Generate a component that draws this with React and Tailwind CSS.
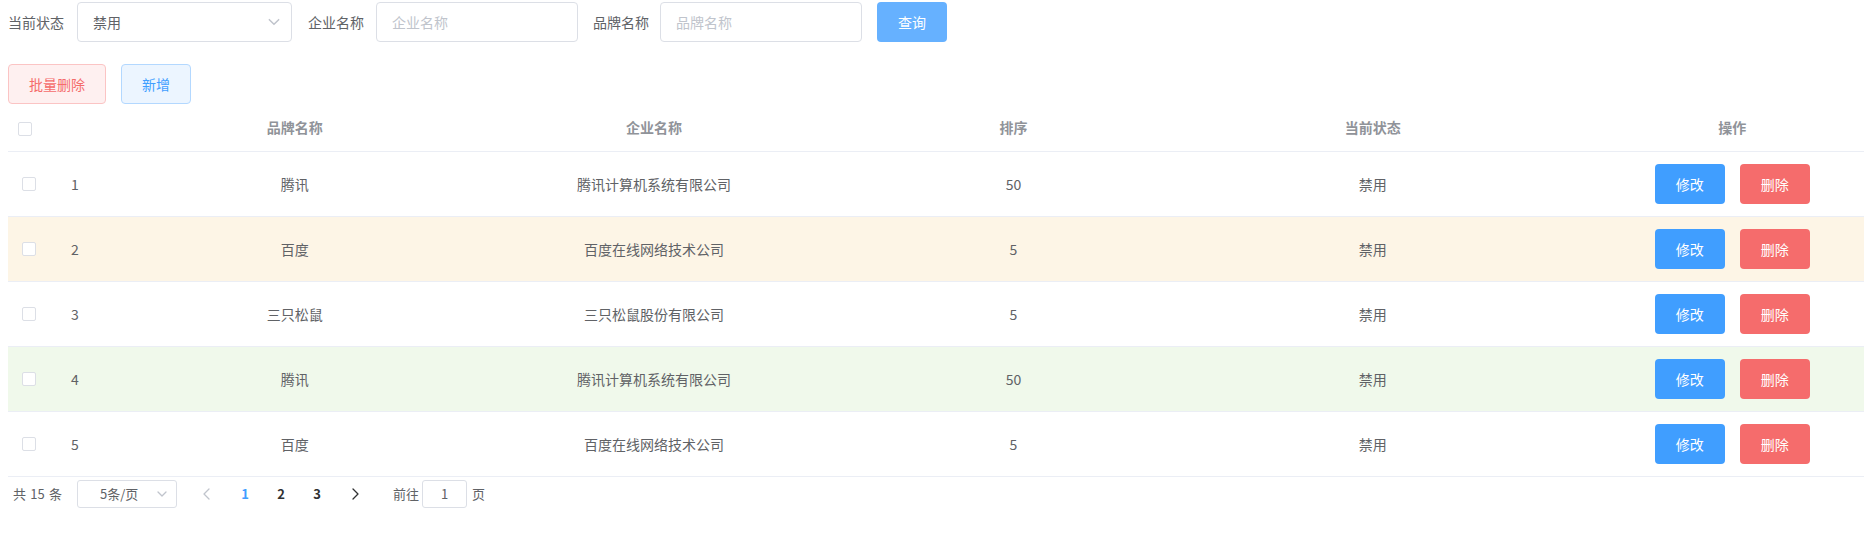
import React from "react";

const rows = [
    { id: 1, brand: "腾讯", company: "腾讯计算机系统有限公司", sort: 50, status: "禁用", bg: "bg-white" },
    { id: 2, brand: "百度", company: "百度在线网络技术公司", sort: 5, status: "禁用", bg: "bg-[#fdf5e6]" },
    { id: 3, brand: "三只松鼠", company: "三只松鼠股份有限公司", sort: 5, status: "禁用", bg: "bg-white" },
    { id: 4, brand: "腾讯", company: "腾讯计算机系统有限公司", sort: 50, status: "禁用", bg: "bg-[#f0f9eb]" },
    { id: 5, brand: "百度", company: "百度在线网络技术公司", sort: 5, status: "禁用", bg: "bg-white" },
];

function Chevron({ dir = "down", color = "#c0c4cc", size = 12 }) {
    const pts = {
        down: "2,4 6,8 10,4",
        left: "8,1 3,6 8,11",
        right: "4,1 9,6 4,11",
    };
    return (
        <svg width={size} height={size} viewBox="0 0 12 12" fill="none">
            <polyline points={pts[dir]} stroke={color} strokeWidth="1.3" strokeLinecap="round" strokeLinejoin="round" />
        </svg>
    );
}

function Checkbox() {
    return <span className="block h-[14px] w-[14px] rounded-[2px] border border-[#dcdfe6] bg-white" />;
}

const cols = "grid grid-cols-[55px_52px_repeat(5,359.4px)]";

function App() {
    return (
        <div className="w-full min-h-screen overflow-hidden bg-white font-['Noto_Sans_CJK_SC',sans-serif] text-[14px] text-[#606266]">

            {/* search form */}
            <div className="mt-[2px] flex h-10 items-center pl-2">
                <span className="leading-none">当前状态</span>
                <div className="ml-[13px] flex h-10 w-[215px] items-center justify-between rounded-[4px] border border-[#dcdfe6] pl-[15px] pr-[10px]">
                    <span className="leading-none">禁用</span>
                    <Chevron dir="down" size={14} />
                </div>
                <span className="ml-4 leading-none">企业名称</span>
                <div className="ml-3 flex h-10 w-[202px] items-center rounded-[4px] border border-[#dcdfe6] px-[15px] text-[#c0c4cc]">
                    <span className="leading-none">企业名称</span>
                </div>
                <span className="ml-[15px] leading-none">品牌名称</span>
                <div className="ml-[11px] flex h-10 w-[202px] items-center rounded-[4px] border border-[#dcdfe6] px-[15px] text-[#c0c4cc]">
                    <span className="leading-none">品牌名称</span>
                </div>
                <button className="ml-[15px] flex h-10 w-[70px] items-center justify-center rounded-[4px] bg-[#66b1ff] text-white">
                    查询
                </button>
            </div>

            {/* actions */}
            <div className="mt-[22px] flex h-10 gap-[15px] pl-2">
                <button className="flex h-10 w-[98px] items-center justify-center rounded-[4px] border border-[#fbc4c4] bg-[#fef0f0] text-[#f56c6c]">
                    批量删除
                </button>
                <button className="flex h-10 w-[70px] items-center justify-center rounded-[4px] border border-[#b3d8ff] bg-[#ecf5ff] text-[#409eff]">
                    新增
                </button>
            </div>

            {/* table */}
            <div className="ml-2 w-[1904px]">
                <div className={`${cols} h-[48px] items-center border-b border-[#ebeef5] font-bold text-[#909399]`}>
                    <div className="pl-[10px] pt-[2px]"><Checkbox /></div>
                    <div />
                    <div className="text-center">品牌名称</div>
                    <div className="text-center">企业名称</div>
                    <div className="text-center">排序</div>
                    <div className="text-center">当前状态</div>
                    <div className="text-center">操作</div>
                </div>
                {rows.map((r) => (
                    <div key={r.id} className={`${cols} h-[65px] items-center border-b border-[#ebeef5] ${r.bg}`}>
                        <div className="pl-[14px]"><Checkbox /></div>
                        <div className="pl-[8px]">{r.id}</div>
                        <div className="text-center">{r.brand}</div>
                        <div className="text-center">{r.company}</div>
                        <div className="text-center">{r.sort}</div>
                        <div className="text-center">{r.status}</div>
                        <div className="flex justify-center gap-[15px]">
                            <button className="flex h-10 w-[70px] items-center justify-center rounded-[4px] bg-[#409eff] text-white">修改</button>
                            <button className="flex h-10 w-[70px] items-center justify-center rounded-[4px] bg-[#f56c6c] text-white">删除</button>
                        </div>
                    </div>
                ))}
            </div>

            {/* pagination */}
            <div className="mt-[3px] flex h-7 items-center pl-[13px] text-[13px]">
                <span className="flex w-[49px] justify-between">
                    <span>共</span>
                    <span>15</span>
                    <span>条</span>
                </span>
                <div className="ml-[15px] flex h-7 w-[100px] items-center justify-between rounded-[3px] border border-[#dcdfe6] pl-[22px] pr-[8px]">
                    <span>5条/页</span>
                    <Chevron dir="down" size={12} />
                </div>
                <div className="ml-[15px] flex w-[30px] justify-center"><Chevron dir="left" /></div>
                <div className="ml-[5px] flex font-bold text-[#303133]">
                    <span className="w-9 text-center text-[#409eff]">1</span>
                    <span className="w-9 text-center">2</span>
                    <span className="w-9 text-center">3</span>
                </div>
                <div className="ml-[5px] flex w-[30px] justify-center"><Chevron dir="right" color="#303133" /></div>
                <span className="ml-[23px]">前往</span>
                <div className="ml-[3px] flex h-7 w-[45px] items-center justify-center rounded-[3px] border border-[#dcdfe6]">1</div>
                <span className="ml-[5px]">页</span>
            </div>
        </div>
    );
}

export default App;
